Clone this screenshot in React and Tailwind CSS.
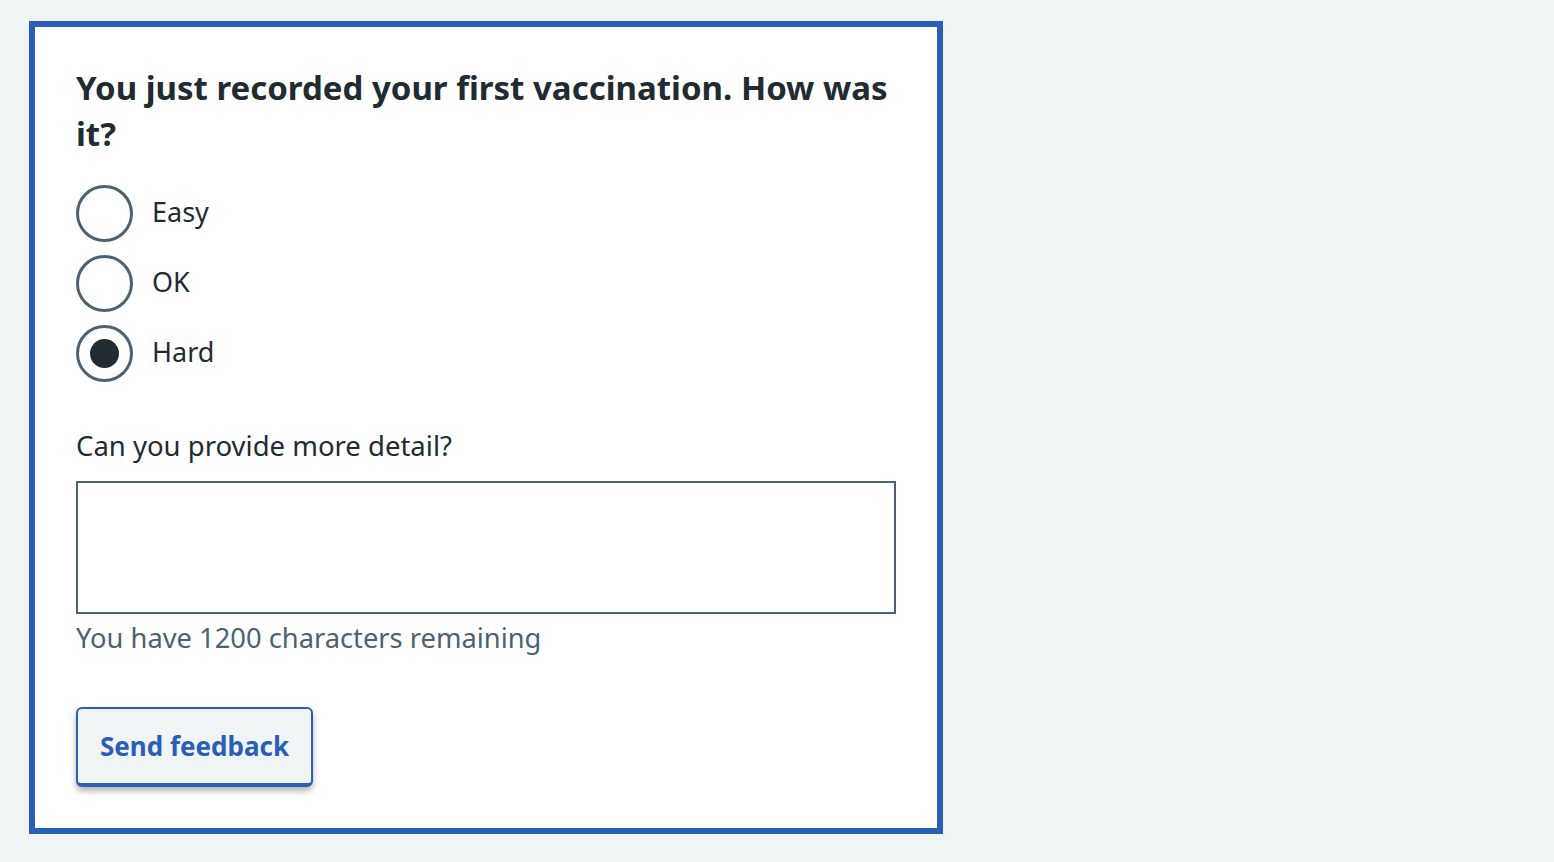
import React, { useState } from "react";

const font = { fontFamily: '"Noto Sans", "Open Sans", Arial, sans-serif' };

function Radio({ label, checked, onChange }) {
  return (
    <label className="flex items-center cursor-pointer">
      <span className="w-[57px] h-[57px] rounded-full border-[3px] border-[#4c6272] bg-white flex items-center justify-center shrink-0">
        {checked && <span className="w-[29px] h-[29px] rounded-full bg-[#212b32]" />}
      </span>
      <input type="radio" className="sr-only" checked={checked} onChange={onChange} />
      <span className="ml-[19px] mb-[4px] text-[27px] leading-[36px] text-[#212b32]">{label}</span>
    </label>
  );
}

export default function App() {
  const [val, setVal] = useState("Hard");
  return (
    <div className="min-h-[862px] w-full bg-[#f0f4f5] pt-[21px] pl-[29px]" style={font}>
      <div className="w-[914px] border-[6px] border-[#2a5fb7] bg-white px-[41px] pt-[38px] pb-[41px]">
        <h2 className="text-[33px] leading-[46px] font-bold text-[#212b32]">
          You just recorded your first vaccination. How was it?
        </h2>
        <div className="mt-[28px] flex flex-col gap-[13px]">
          {["Easy", "OK", "Hard"].map((l) => (
            <Radio key={l} label={l} checked={val === l} onChange={() => setVal(l)} />
          ))}
        </div>
        <div className="mt-[46px] text-[27.5px] leading-[36px] text-[#212b32]">Can you provide more detail?</div>
        <textarea className="mt-[17px] block w-[820px] h-[133px] border-2 border-[#4c6272] resize-none outline-none" />
        <div className="mt-[6px] text-[27.3px] leading-[36px] text-[#4c6272]">You have 1200 characters remaining</div>
        <button className="mt-[51px] h-[80px] px-[22px] rounded-[6px] border-2 border-b-4 border-[#2a5fb7] bg-[#f0f4f5] text-[#2a5fb7] text-[26px] font-bold shadow-[0_4px_6px_rgba(0,0,0,0.3)]">
          Send feedback
        </button>
      </div>
    </div>
  );
}
